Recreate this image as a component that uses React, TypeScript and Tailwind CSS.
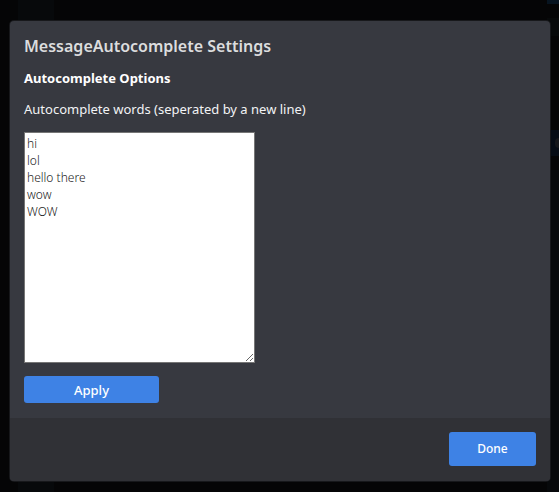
import { useState } from "react";

function Backdrop() {
  return (
    <div aria-hidden="true" className="absolute inset-0 -z-10 flex justify-between overflow-hidden bg-[#050506]">
      <div className="ml-[18px] w-9 bg-[#07090b]" />
      <div className="flex w-3 flex-col">
        <div className="h-1 bg-[#071420]" />
        <div className="mt-3.5 h-[18px] bg-[#07090a]" />
        <div className="mt-[94px] flex h-[26px] items-center justify-end bg-[#060c15]">
          <div className="h-[10px] w-1 rounded-l bg-[#15171b]" />
        </div>
        <div className="mt-3.5 flex-1 bg-[#07090b]" />
      </div>
    </div>
  );
}

export default function App() {
  const [words, setWords] = useState("hi\nlol\nhello there\nwow\nWOW");

  return (
    <div className="relative isolate min-h-screen pt-[21px] pr-[9px] pb-[11px] pl-[10px] font-['Noto_Sans',sans-serif]">
      <Backdrop />
      <section
        role="dialog"
        aria-labelledby="settings-title"
        className="overflow-hidden rounded bg-[#373940] shadow-[0_0_0_1px_#17181b]"
      >
        <div className="flex flex-col items-start px-[14px] pt-[14px] pb-[15px]">
          <h1 id="settings-title" className="text-base leading-[22px] font-semibold text-[#dcddde]">
            MessageAutocomplete Settings
          </h1>
          <h2 className="mt-[11px] text-[13px] leading-5 font-bold text-white">Autocomplete Options</h2>
          <label htmlFor="words" className="mt-[11px] text-[13px] leading-5 text-[#f2f3f5]">
            Autocomplete words (seperated by a new line)
          </label>
          <textarea
            id="words"
            spellCheck={false}
            value={words}
            onChange={(event) => setWords(event.target.value)}
            className="mt-[13px] size-[231px] resize border border-[#767676] bg-white p-[2px] text-xs leading-[17px] font-light text-[#222222] outline-none"
          />
          <button
            type="button"
            className="mt-[13px] h-[27px] w-[135px] rounded-[3px] bg-[#3e82e5] text-[13px] leading-5 font-medium text-white"
          >
            Apply
          </button>
        </div>
        <footer className="flex justify-end bg-[#303136] p-[14px] pb-[15px]">
          <button type="button" className="h-[34px] w-[87px] rounded-[3px] bg-[#3e82e5] text-xs font-medium text-white">
            Done
          </button>
        </footer>
      </section>
    </div>
  );
}
